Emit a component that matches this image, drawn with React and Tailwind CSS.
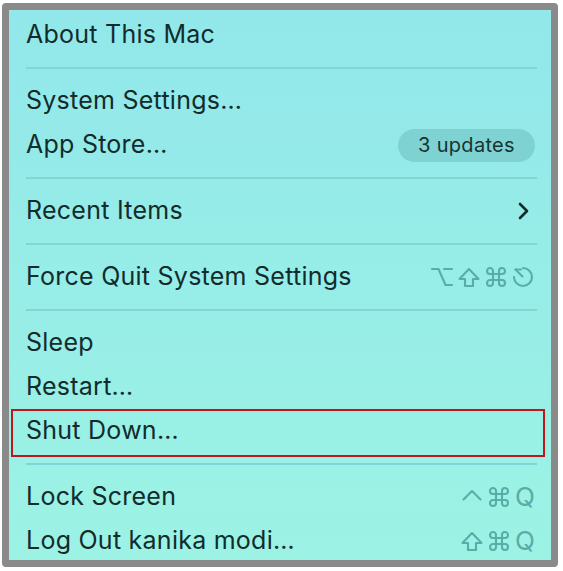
import React from "react";

const G = "#5aaca8";

function Svg({ children, w = 24, h = 24, sw = "2.1" }) {
  return (
    <svg width={w} height={h} viewBox="0 0 24 24" fill="none" stroke={G} strokeWidth={sw} strokeLinecap="round" strokeLinejoin="round">
      {children}
    </svg>
  );
}

const Opt = () => (
  <Svg>
    <path d="M2 4h6.5l7 16H22" />
    <path d="M14 4h8" />
  </Svg>
);
const Shift = () => (
  <Svg>
    <path d="M8 21v-7H2.5L12 4l9.5 10H16v7H8z" />
  </Svg>
);
const Cmd = () => (
  <Svg>
    <path d="M15 6v12a3 3 0 1 0 3-3H6a3 3 0 1 0 3 3V6a3 3 0 1 0-3 3h12a3 3 0 1 0-3-3" />
  </Svg>
);
const Esc = () => (
  <Svg>
    <path d="M12 3a9 9 0 1 1-9 9" />
    <path d="M4.5 4.5l7 7" />
    <path d="M4.5 4.5h5.5" />
  </Svg>
);
const Ctrl = () => (
  <Svg sw="2">
    <path d="M3.5 14.5l8.5-8.5 8.5 8.5" />
  </Svg>
);
const Q = () => (
  <span className="text-[26px] leading-none ml-[1px]" style={{ color: G }}>Q</span>
);

function Row({ label, right, children, className = "" }) {
  return (
    <div className={"relative h-[44px] shrink-0 flex items-center pl-[17px] pr-[16px] " + className}>
      <span className="text-[25px] text-[#122c2c] tracking-[0.25px]">{label}</span>
      <div className="ml-auto flex items-center">{right}</div>
      {children}
    </div>
  );
}

const Sep = () => (
  <div className="h-[22px] shrink-0 flex items-center pl-[17px] pr-[14px]">
    <div className="h-[2px] w-full bg-[#80d5d6]" />
  </div>
);

export default function App() {
  return (
    <div className="w-[563px] h-[571px] bg-white pt-[3px] pl-[2px]" style={{ fontFamily: "Inter, 'Noto Sans', sans-serif" }}>
      <div className="w-[556px] h-[564px] border-[7px] border-[#8a8a8a] rounded-[4px] overflow-hidden bg-gradient-to-b from-[#92e7ea] to-[#9cf3e4] pt-[3px] flex flex-col">
        <Row label="About This Mac" />
        <Sep />
        <Row label="System Settings…" />
        <Row
          label="App Store…"
          className="pr-[13px]"
          right={
            <div className="w-[137px] h-[33px] rounded-full bg-[#7ed3d2] flex items-center justify-center text-[20px] tracking-[0.3px] text-[#173333]">
              3 updates
            </div>
          }
        />
        <Sep />
        <Row
          label="Recent Items"
          className="pr-[22px]"
          right={
            <svg width="12" height="18" viewBox="0 0 12 18" fill="none" stroke="#122c2c" strokeWidth="2.6" strokeLinecap="round" strokeLinejoin="round">
              <path d="M3 2l7 7-7 7" />
            </svg>
          }
        />
        <Sep />
        <Row
          label="Force Quit System Settings"
          className="pr-[15px]"
          right={
            <div className="flex items-center gap-[3px]">
              <Opt />
              <Shift />
              <Cmd />
              <Esc />
            </div>
          }
        />
        <Sep />
        <Row label="Sleep" />
        <Row label="Restart…" />
        <Row label="Shut Down…">
          <div className="absolute left-[2px] right-[6px] top-0 h-[48px] border-2 border-[#c3161c] pointer-events-none" />
        </Row>
        <Sep />
        <Row
          label="Lock Screen"
          right={
            <div className="flex items-center gap-[3px]">
              <Ctrl />
              <Cmd />
              <Q />
            </div>
          }
        />
        <Row
          label="Log Out kanika modi…"
          right={
            <div className="flex items-center gap-[3px]">
              <Shift />
              <Cmd />
              <Q />
            </div>
          }
        />
      </div>
    </div>
  );
}
